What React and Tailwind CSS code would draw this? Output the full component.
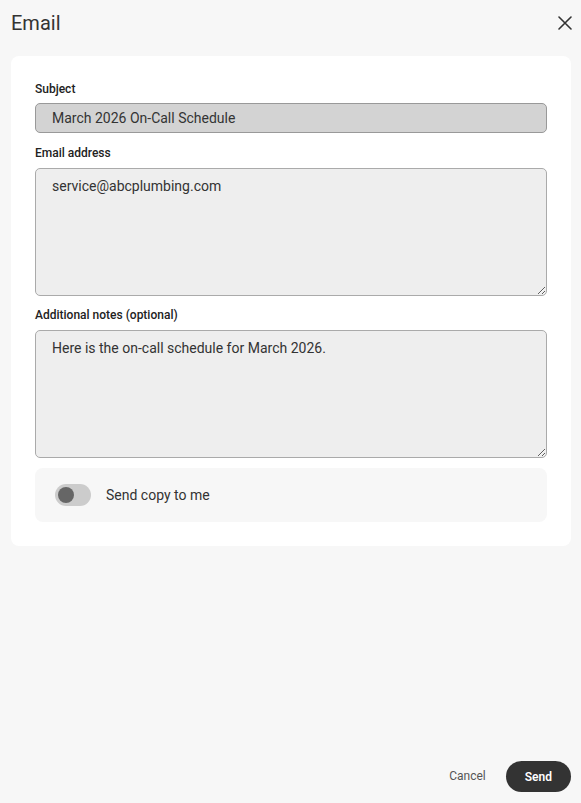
export default function App() {
  return (
    <div className="min-h-screen bg-[#f7f7f7] flex flex-col text-[#333]" style={{ fontFamily: 'Roboto, "Liberation Sans", sans-serif' }}>
      {/* Header */}
      <div className="h-[45px] flex items-center justify-between pl-[11px] pr-[8px]">
        <h1 className="text-[20px] leading-[24px] font-normal text-[#333]">Email</h1>
        <button className="w-[16px] h-[16px] flex items-center justify-center text-[#333]">
          <svg width="14" height="14" viewBox="0 0 14 14" fill="none" stroke="currentColor" strokeWidth="1.6" strokeLinecap="round">
            <path d="M1 1L13 13M13 1L1 13" />
          </svg>
        </button>
      </div>

      {/* Card */}
      <div className="ml-[11px] mr-[10px] mt-[11px] bg-white rounded-lg px-6 pt-[25px] pb-6">
        <label className="block text-xs leading-4 font-medium text-[#222] mb-[6px]">Subject</label>
        <input
          readOnly
          value="March 2026 On-Call Schedule"
          className="w-full h-[30px] bg-[#d3d3d3] border border-[#999] rounded-[5px] px-4 text-sm text-[#333] outline-none"
        />

        <label className="block text-xs leading-4 font-medium text-[#222] mt-3 mb-[7px]">Email address</label>
        <textarea
          readOnly
          value="service@abcplumbing.com"
          className="block w-full h-[128px] bg-[#eeeeee] border border-[#aaa] rounded-[5px] px-4 pt-[7px] text-sm leading-5 text-[#333] outline-none"
        />

        <label className="block text-xs leading-4 font-medium text-[#222] mt-[11px] mb-[7px]">Additional notes (optional)</label>
        <textarea
          readOnly
          value="Here is the on-call schedule for March 2026."
          className="block w-full h-[128px] bg-[#eeeeee] border border-[#aaa] rounded-[5px] px-4 pt-[7px] text-sm leading-5 text-[#333] outline-none"
        />

        <div className="mt-[10px] h-[54px] bg-[#f7f7f7] rounded-lg flex items-center px-5 gap-[15px]">
          <div className="w-[36px] h-[22px] rounded-full bg-[#cccccc] flex items-center px-[3px]">
            <div className="w-[16px] h-[16px] rounded-full bg-[#666]" />
          </div>
          <span className="text-sm text-[#333]">Send copy to me</span>
        </div>
      </div>

      <div className="flex-1" />

      {/* Footer */}
      <div className="flex items-center justify-end gap-5 pr-[10px] pb-[11px]">
        <button className="text-xs text-[#555] mb-[2px]">Cancel</button>
        <button className="h-[31px] px-[19px] rounded-full bg-[#333] text-white text-xs font-semibold">Send</button>
      </div>
    </div>
  )
}
